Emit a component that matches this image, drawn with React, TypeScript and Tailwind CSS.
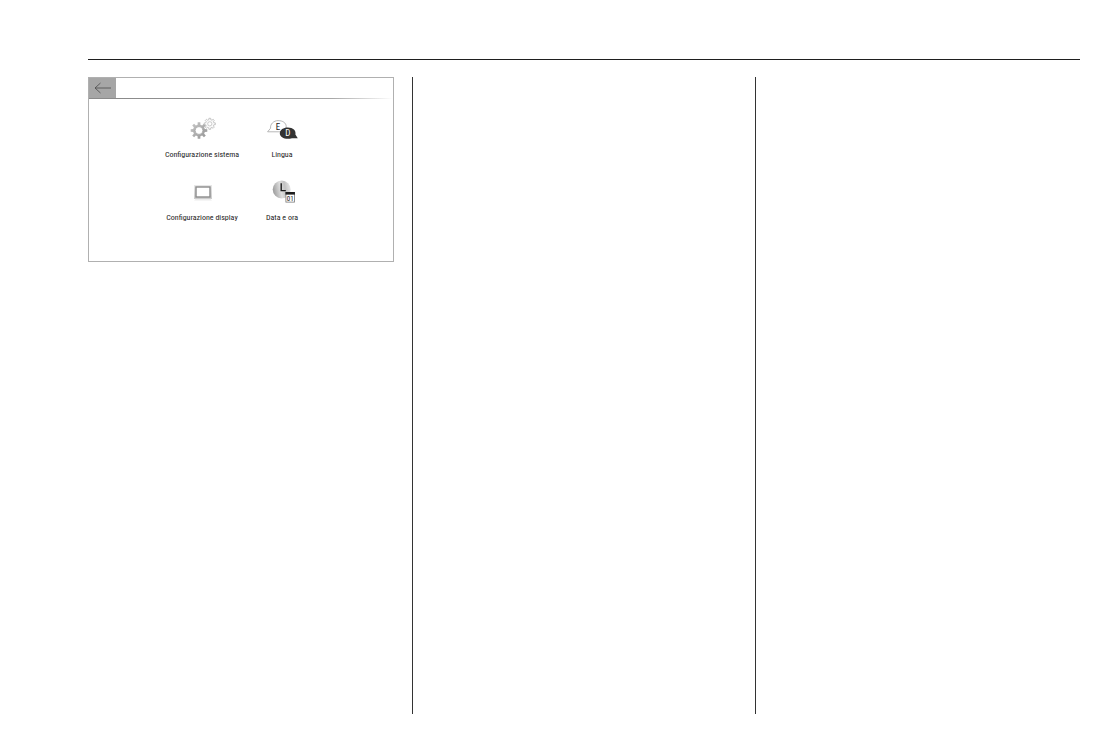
import React from "react";

// Outline of a gear with flat teeth, drawn around cx/cy
function gearPath(cx: number, cy: number, outer: number, inner: number, teeth: number) {
  const step = (Math.PI * 2) / teeth;
  const points: string[] = [];

  for (let i = 0; i < teeth; i++) {
    const a = i * step;
    const corners = [
      [inner, -0.3],
      [outer, -0.2],
      [outer, 0.2],
      [inner, 0.3],
    ];
    corners.forEach(([r, offset]) => {
      const angle = a + offset * step;
      points.push(`${(cx + r * Math.cos(angle)).toFixed(2)} ${(cy + r * Math.sin(angle)).toFixed(2)}`);
    });
  }
  return `M${points.join("L")}Z`;
}

function SystemIcon() {
  return (
    <svg viewBox="0 0 32 32" className="w-8 h-8" aria-hidden="true">
      <defs>
        <linearGradient id="gear" x1="0" y1="0" x2="1" y2="1">
          <stop offset="0" stopColor="#c8c8c8" />
          <stop offset="1" stopColor="#949494" />
        </linearGradient>
      </defs>
      <path d={gearPath(13, 17.5, 8.4, 6, 8)} fill="url(#gear)" />
      <circle cx="13" cy="17.5" r="3.9" fill="#fff" stroke="#8f8f8f" strokeWidth="0.6" />
      <path d={gearPath(23.8, 10.8, 5.6, 4.2, 8)} fill="#fafafa" stroke="#b0b0b0" strokeWidth="0.7" />
      <circle cx="23.8" cy="10.8" r="2.1" fill="#fff" stroke="#b8b8b8" strokeWidth="0.7" />
    </svg>
  );
}

function LanguageIcon() {
  return (
    <svg viewBox="0 0 32 32" className="w-8 h-8" aria-hidden="true">
      <path
        d="M1.6 18.8L4.6 15.2C4 11.2 7.6 7.6 12.1 7.6C16.8 7.6 20.2 10 20.2 13.4C20.2 16.8 16.6 18.8 12.2 18.8Z"
        fill="#fff"
        stroke="#9a9a9a"
        strokeWidth="0.7"
      />
      <text x="11.9" y="16.6" textAnchor="middle" fontSize="9" fill="#222">
        E
      </text>
      <path
        d="M31.8 25.2L26 25.2C19.6 27 13.8 24.4 13.8 20.2C13.8 16.8 17.4 14.4 21.8 14.4C27 14.4 30.4 17.4 29.4 21.6Z"
        fill="#333"
      />
      <text x="21.8" y="23.4" textAnchor="middle" fontSize="9" fill="#fff">
        D
      </text>
    </svg>
  );
}

function DisplayIcon() {
  return (
    <svg viewBox="0 0 32 32" className="w-8 h-8" aria-hidden="true">
      <defs>
        <linearGradient id="bezel" x1="0" y1="0" x2="0" y2="1">
          <stop offset="0" stopColor="#e8e8e8" />
          <stop offset="1" stopColor="#cccccc" />
        </linearGradient>
      </defs>
      <path d="M9.5 23h15l1.5 1.5h-18z" fill="#ececec" />
      <rect x="8" y="9" width="18" height="14" fill="url(#bezel)" />
      <rect x="10" y="11" width="14" height="10" fill="#fff" stroke="#8c8c8c" strokeWidth="1.4" />
    </svg>
  );
}

function ClockIcon() {
  return (
    <svg viewBox="0 0 32 32" className="w-8 h-8" aria-hidden="true">
      <defs>
        <linearGradient id="dial" x1="0" y1="0.6" x2="1" y2="0.4">
          <stop offset="0" stopColor="#9a9a9a" />
          <stop offset="0.45" stopColor="#dedede" />
          <stop offset="0.7" stopColor="#c2c2c2" />
          <stop offset="1" stopColor="#e8e8e8" />
        </linearGradient>
      </defs>
      <circle cx="15.7" cy="13.5" r="9" fill="url(#dial)" />
      <path d="M15.2 7.3V14.6H19.8" fill="none" stroke="#1c1c1c" strokeWidth="1.4" />
      <rect x="19.9" y="16.5" width="8.6" height="9.6" fill="#fff" stroke="#777" strokeWidth="0.8" />
      <rect x="19.5" y="16" width="9.4" height="2.6" fill="#1c1c1c" />
      <text x="24.2" y="25" textAnchor="middle" fontSize="7" fill="#222">
        01
      </text>
    </svg>
  );
}

const items = [
  { label: "Configurazione sistema", icon: <SystemIcon /> },
  { label: "Lingua", icon: <LanguageIcon /> },
  { label: "Configurazione display", icon: <DisplayIcon /> },
  { label: "Data e ora", icon: <ClockIcon /> },
];

function SettingsPanel() {
  return (
    <section className="border border-[#b0b0b0] bg-white">
      <div className="flex h-5">
        <button aria-label="Indietro" className="w-[27px] flex items-center justify-center bg-[#a6a6a6] cursor-pointer">
          <svg viewBox="0 0 18 12" className="w-[18px] h-3" fill="none" stroke="#4a4a4a" strokeWidth="0.8" aria-hidden="true">
            <path d="M17 6H1M6.5 1L1 6L6.5 11" />
          </svg>
        </button>
      </div>
      <div className="h-px bg-linear-to-r from-[#8a8a8a] from-10% via-[#a8a8a8] via-80% to-white" />

      <div className="grid grid-cols-[80px_80px] justify-center gap-y-[11px] pl-0.5 pt-3.5 pb-[33px]">
        {items.map((item) => (
          <button key={item.label} className="flex flex-col items-center cursor-pointer">
            {item.icon}
            <span className="text-[8px] leading-5 text-[#222] whitespace-nowrap">{item.label}</span>
          </button>
        ))}
      </div>
    </section>
  );
}

export default function App() {
  return (
    <main className="min-h-screen flex flex-col bg-white pt-[59px] pl-[88px] pr-10 pb-9 font-['Roboto_Condensed','Roboto',sans-serif]">
      <hr className="border-0 h-px bg-[#1f1f1f]" />
      <div className="flex-1 flex mt-[17px]">
        <div className="flex-1 min-w-0 pr-[18px]">
          <SettingsPanel />
        </div>
        <div className="flex-1 min-w-0 border-l border-[#333] px-[18px]" />
        <div className="flex-1 min-w-0 border-l border-[#333] pl-[18px]" />
      </div>
    </main>
  );
}
